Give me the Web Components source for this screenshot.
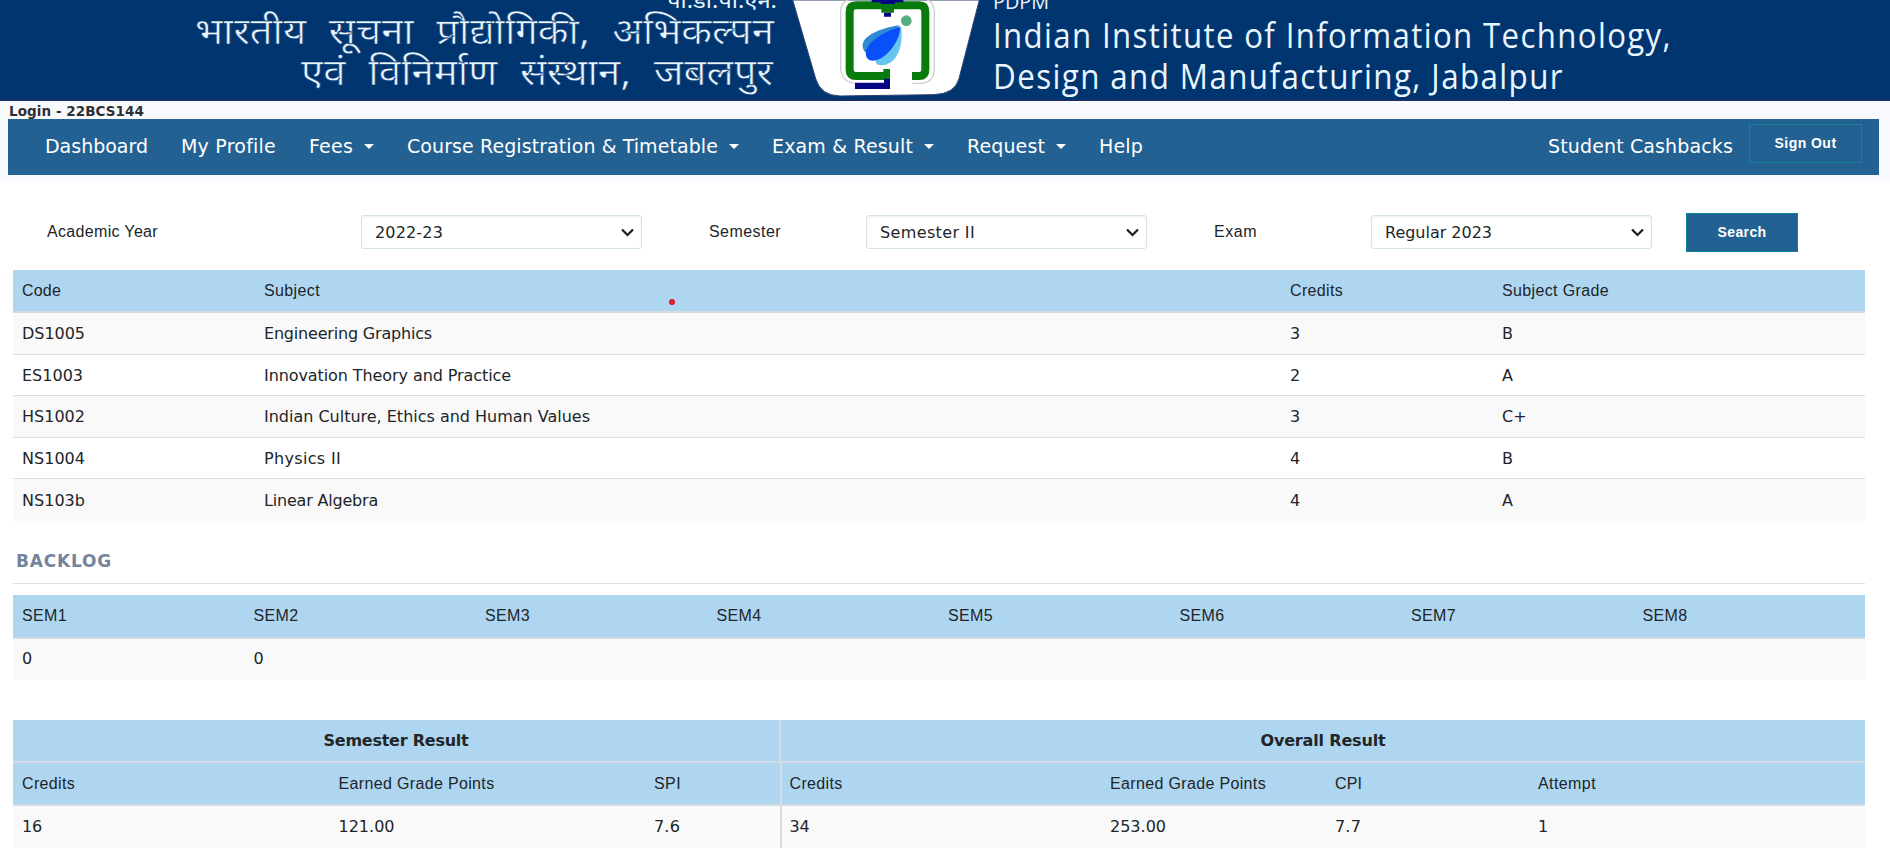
<!DOCTYPE html>
<html lang="en">
<head>
<meta charset="utf-8">
<title>Results</title>
<style>
html,body{margin:0;background:#fff;overflow:hidden}
body{font:16px/24px "DejaVu Sans","Liberation Sans",sans-serif;color:#212529}
</style>
</head>
<body>
<results-page></results-page>
<script>
const define=(name,html,after)=>{
  const t=document.createElement('template');t.innerHTML=html;
  customElements.define(name,class extends HTMLElement{
    connectedCallback(){
      if(this.shadowRoot)return;
      this.attachShadow({mode:'open'}).append(t.content.cloneNode(true));
      if(after)after(this,this.shadowRoot);
    }
  });
};

define('site-banner',`<style>:host{display:block;height:101px;background:#01356f}svg{display:block}</style>
<svg width="1890" height="101" viewBox="0 0 1890 101">
<rect width="1890" height="101" fill="#003570"/><rect y="99.5" width="1890" height="1.5" fill="#1d2d66"/>
<g fill="#eaf6ff" stroke="#003570" stroke-width=".6" font-family="'Noto Sans Devanagari','Noto Sans',sans-serif">
<text x="667" y="8" font-size="21" stroke="none" textLength="110" lengthAdjust="spacingAndGlyphs">पी.डी.पी.एन.</text>
<text x="195" y="44" font-size="36" word-spacing="11" textLength="579" lengthAdjust="spacingAndGlyphs">भारतीय सूचना प्रौद्योगिकी, अभिकल्पन</text>
<text x="301" y="85" font-size="36" word-spacing="11" textLength="472" lengthAdjust="spacingAndGlyphs">एवं विनिर्माण संस्थान, जबलपुर</text>
</g>
<g fill="#eaf6ff" font-family="'Open Sans','Noto Sans',sans-serif">
<text x="993" y="8.500" font-size="20" textLength="56" lengthAdjust="spacingAndGlyphs">PDPM</text>
<text x="993" y="48" font-size="34" letter-spacing="1.500" textLength="679" lengthAdjust="spacingAndGlyphs">Indian Institute of Information Technology,</text>
<text x="993" y="88.500" font-size="34" letter-spacing="1.500" textLength="571" lengthAdjust="spacingAndGlyphs">Design and Manufacturing, Jabalpur</text>
</g>
<g transform="translate(780 0) scale(.33333)">
<path d="M38 0 L107 236 Q122 287 180 288 L460 284 Q525 282 537 236 L598 0Z" fill="#fff" stroke="#2a3f6c" stroke-width="3"/>
<path d="M205 0 Q182 6 182 34 V205 Q184 246 225 250 M396 250 H425 Q463 247 463 205 V34 Q462 8 442 0" fill="none" stroke="#cdd1cd" stroke-width="4"/>
<path d="M330 228 H228 Q209 228 209 209 V35 Q209 16 228 16 H417 Q436 16 436 35 V209 Q436 228 417 228 H396" fill="none" stroke="#087b0c" stroke-width="24"/>
<path d="M304 26H342V38H304ZM310 207H330V220H310Z" fill="#087b0c"/>
<path d="M275 0H370V7H345V12H302V7H275ZM312 38H333V50H312ZM312 236H330V267H225V248H312Z" fill="#050582"/>
<path d="M359 76 C300 84 240 110 249 143 C255 175 286 158 359 76Z" fill="#2e8bcf"/>
<path d="M363 78 C372 140 350 195 303 196 C270 192 285 160 363 78Z" fill="#65c5ee"/>
<path d="M360 80 C365 110 325 180 278 182 C250 181 253 145 275 126 C300 103 335 88 360 80Z" fill="#0a50fa"/>
<circle cx="379" cy="62" r="16" fill="#57ad7d"/>
</g></svg>`);

define('nav-link',`<style>:host{display:flex;align-items:center;flex:none;font-size:19px;line-height:27px;color:#fff;white-space:nowrap}
i{display:none;margin-left:11px;border:5px solid transparent;border-top-color:#fff;border-bottom:0}:host([menu]) i{display:block}</style><slot></slot><i></i>`);

define('push-button',`<style>:host{display:flex;box-sizing:border-box;width:113px;height:39px;border:1px solid #138496;background:#236192;color:#fff;align-items:center;justify-content:center;padding-bottom:2px;font:bold 14px/20px "Liberation Sans",Arial,sans-serif}</style><slot></slot>`);

define('select-box',`<style>:host{display:flex;box-sizing:border-box;width:281px;height:34px;border:1px solid #d3e2eb;border-radius:3px;box-shadow:inset 0 1px 2px #0001;align-items:center;justify-content:space-between;padding:2px 7px 0 13px;margin-top:-2px;color:#212529;background:#fff}</style><slot></slot><svg width="13" height="9" viewBox="0 0 13 9"><path d="M1 1.500 6.500 7 12 1.500" fill="none" stroke="#1c1c1c" stroke-width="2.200"/></svg>`);

define('table-row',`<style>:host{display:grid;box-sizing:border-box;height:41.500px;align-items:center;background:#fff;border-bottom:1px solid #dcdee0;padding-top:2px}
:host([stripe]){background:#f9f9f9}:host([last]){border-bottom:0}
:host([head]){height:43px;padding-top:0;background:#aed6f0;border-bottom:2px solid #d3dbe3;font-family:"Liberation Sans",Arial,sans-serif}
:host([group]){font-family:"DejaVu Sans",sans-serif;font-weight:bold}
:host([flush]){padding-top:0}
::slotted(span){padding-left:9px;box-sizing:border-box;white-space:nowrap}
::slotted(.mid){padding:0;text-align:center}
::slotted(.div){border-left:2px solid #d8dbe0;height:100%;display:flex;align-items:center;padding-left:8px}
::slotted(.div.mid){justify-content:center;padding:0}
</style><slot></slot>`,el=>{el.style.gridTemplateColumns=el.getAttribute('cols')});

const F=(w,s)=>`<fit-text w="${w}">${s}</fit-text>`;
const C1='242px 1026px 212px 1fr', C3='316.500px 315.500px 134.500px 321.500px 225px 203px 1fr', C8='repeat(8,1fr)';
const subjects=[['DS1005',62,'Engineering Graphics',167,'3','B'],['ES1003',60,'Innovation Theory and Practice',246,'2','A'],['HS1002',62,'Indian Culture, Ethics and Human Values',325,'3','C+'],['NS1004',62,'Physics II',76,'4','B'],['NS103b',62,'Linear Algebra',113,'4','A']];

define('results-page',`<style>
:host{display:block;position:relative;width:1890px;height:865px;overflow:hidden;background:#fff}
.top{background:#f8f9fc;height:80px}
.login{height:18px;padding-left:9px;font:bold 13.500px/20px "DejaVu Sans",sans-serif;color:#2d2f33}
nav{display:flex;margin:0 11px 0 8px;height:56px;background:#236192;box-sizing:border-box;padding:5px 17px 0 37px;align-items:flex-start}
nav nav-link{margin-top:9px}
.grow{flex:1}
.filters{display:grid;grid-template-columns:314px 348px 157px 348px 157px 315px auto;height:39px;margin:32px 0 0 47px;font-family:"Liberation Sans",Arial,sans-serif;align-items:center}
.filters select-box{font-family:"DejaVu Sans",sans-serif}
.filters span{margin-top:-1px}
.filters push-button{width:112px}
.tbl{display:block;width:1852px;margin-left:13px}
.t1{margin-top:18px}
h4{margin:28px 0 0 16px;font:bold 17px/24px "DejaVu Sans",sans-serif;color:#76839c}
hr{border:0;height:1px;background:#d5e1e9;margin:10px 25px 11px 13px}
.t3{margin-top:40px}
.dot{position:absolute;left:669px;top:299px;width:6px;height:6px;border-radius:50%;background:#dc1f26}
</style>
<site-banner></site-banner>
<div class="top"><div class="login">${F(134,'Login - 22BCS144')}</div>
<nav>
<nav-link>${F(102,'Dashboard')}</nav-link>
<nav-link style="margin-left:33px">${F(94,'My Profile')}</nav-link>
<nav-link menu style="margin-left:33px">${F(43,'Fees')}</nav-link>
<nav-link menu style="margin-left:33px">${F(310,'Course Registration &amp; Timetable')}</nav-link>
<nav-link menu style="margin-left:33px">${F(140,'Exam &amp; Result')}</nav-link>
<nav-link menu style="margin-left:33px">${F(77,'Request')}</nav-link>
<nav-link style="margin-left:33px">${F(43,'Help')}</nav-link>
<div class="grow"></div>
<nav-link style="margin-right:16px">${F(184,'Student Cashbacks')}</nav-link>
<push-button>${F(61,'Sign Out')}</push-button>
</nav></div>
<div class="filters">
<span>${F(110,'Academic Year')}</span><select-box>${F(67,'2022-23')}</select-box>
<span>${F(71,'Semester')}</span><select-box>${F(94,'Semester II')}</select-box>
<span>${F(42,'Exam')}</span><select-box>${F(106,'Regular 2023')}</select-box>
<push-button>${F(48,'Search')}</push-button>
</div>
<div class="tbl t1">
<table-row head cols="${C1}"><span>${F(38,'Code')}</span><span>${F(55,'Subject')}</span><span>${F(52,'Credits')}</span><span>${F(106,'Subject Grade')}</span></table-row>
${subjects.map((s,i)=>`<table-row cols="${C1}" ${i%2?'':'stripe'} ${i==4?'last':''}><span>${F(s[1],s[0])}</span><span>${F(s[3],s[2])}</span><span>${s[4]}</span><span>${s[5]}</span></table-row>`).join('')}
</div>
<h4>${F(95,'BACKLOG')}</h4><hr>
<div class="tbl">
<table-row head style="height:44px" cols="${C8}">${[1,2,3,4,5,6,7,8].map(n=>`<span>${F(44,'SEM'+n)}</span>`).join('')}</table-row>
<table-row stripe last flush cols="${C8}"><span>0</span><span>0</span></table-row>
</div>
<div class="tbl t3">
<table-row head group cols="766px 1fr"><span class="mid">${F(144,'Semester Result')}</span><span class="mid div">${F(124,'Overall Result')}</span></table-row>
<table-row head cols="${C3}"><span>${F(52,'Credits')}</span><span>${F(155,'Earned Grade Points')}</span><span>${F(26,'SPI')}</span><span class="div">${F(52,'Credits')}</span><span>${F(155,'Earned Grade Points')}</span><span>${F(26,'CPI')}</span><span>${F(57,'Attempt')}</span></table-row>
<table-row stripe last flush cols="${C3}"><span>${F(19,'16')}</span><span>${F(55,'121.00')}</span><span>${F(25,'7.6')}</span><span class="div">${F(19,'34')}</span><span>${F(55,'253.00')}</span><span>${F(25,'7.7')}</span><span>1</span></table-row>
</div>
<div class="dot"></div>`);

/* Spreads its letters so that the run of text takes the width in "w". */
define('fit-text',`<style>:host{display:inline-block;white-space:nowrap}</style><slot></slot>`,el=>{
  const w=+el.getAttribute('w'),n=el.textContent.length;
  el.style.letterSpacing=((w+1-el.getBoundingClientRect().width)/n).toFixed(3)+'px';
});
</script>
</body>
</html>
